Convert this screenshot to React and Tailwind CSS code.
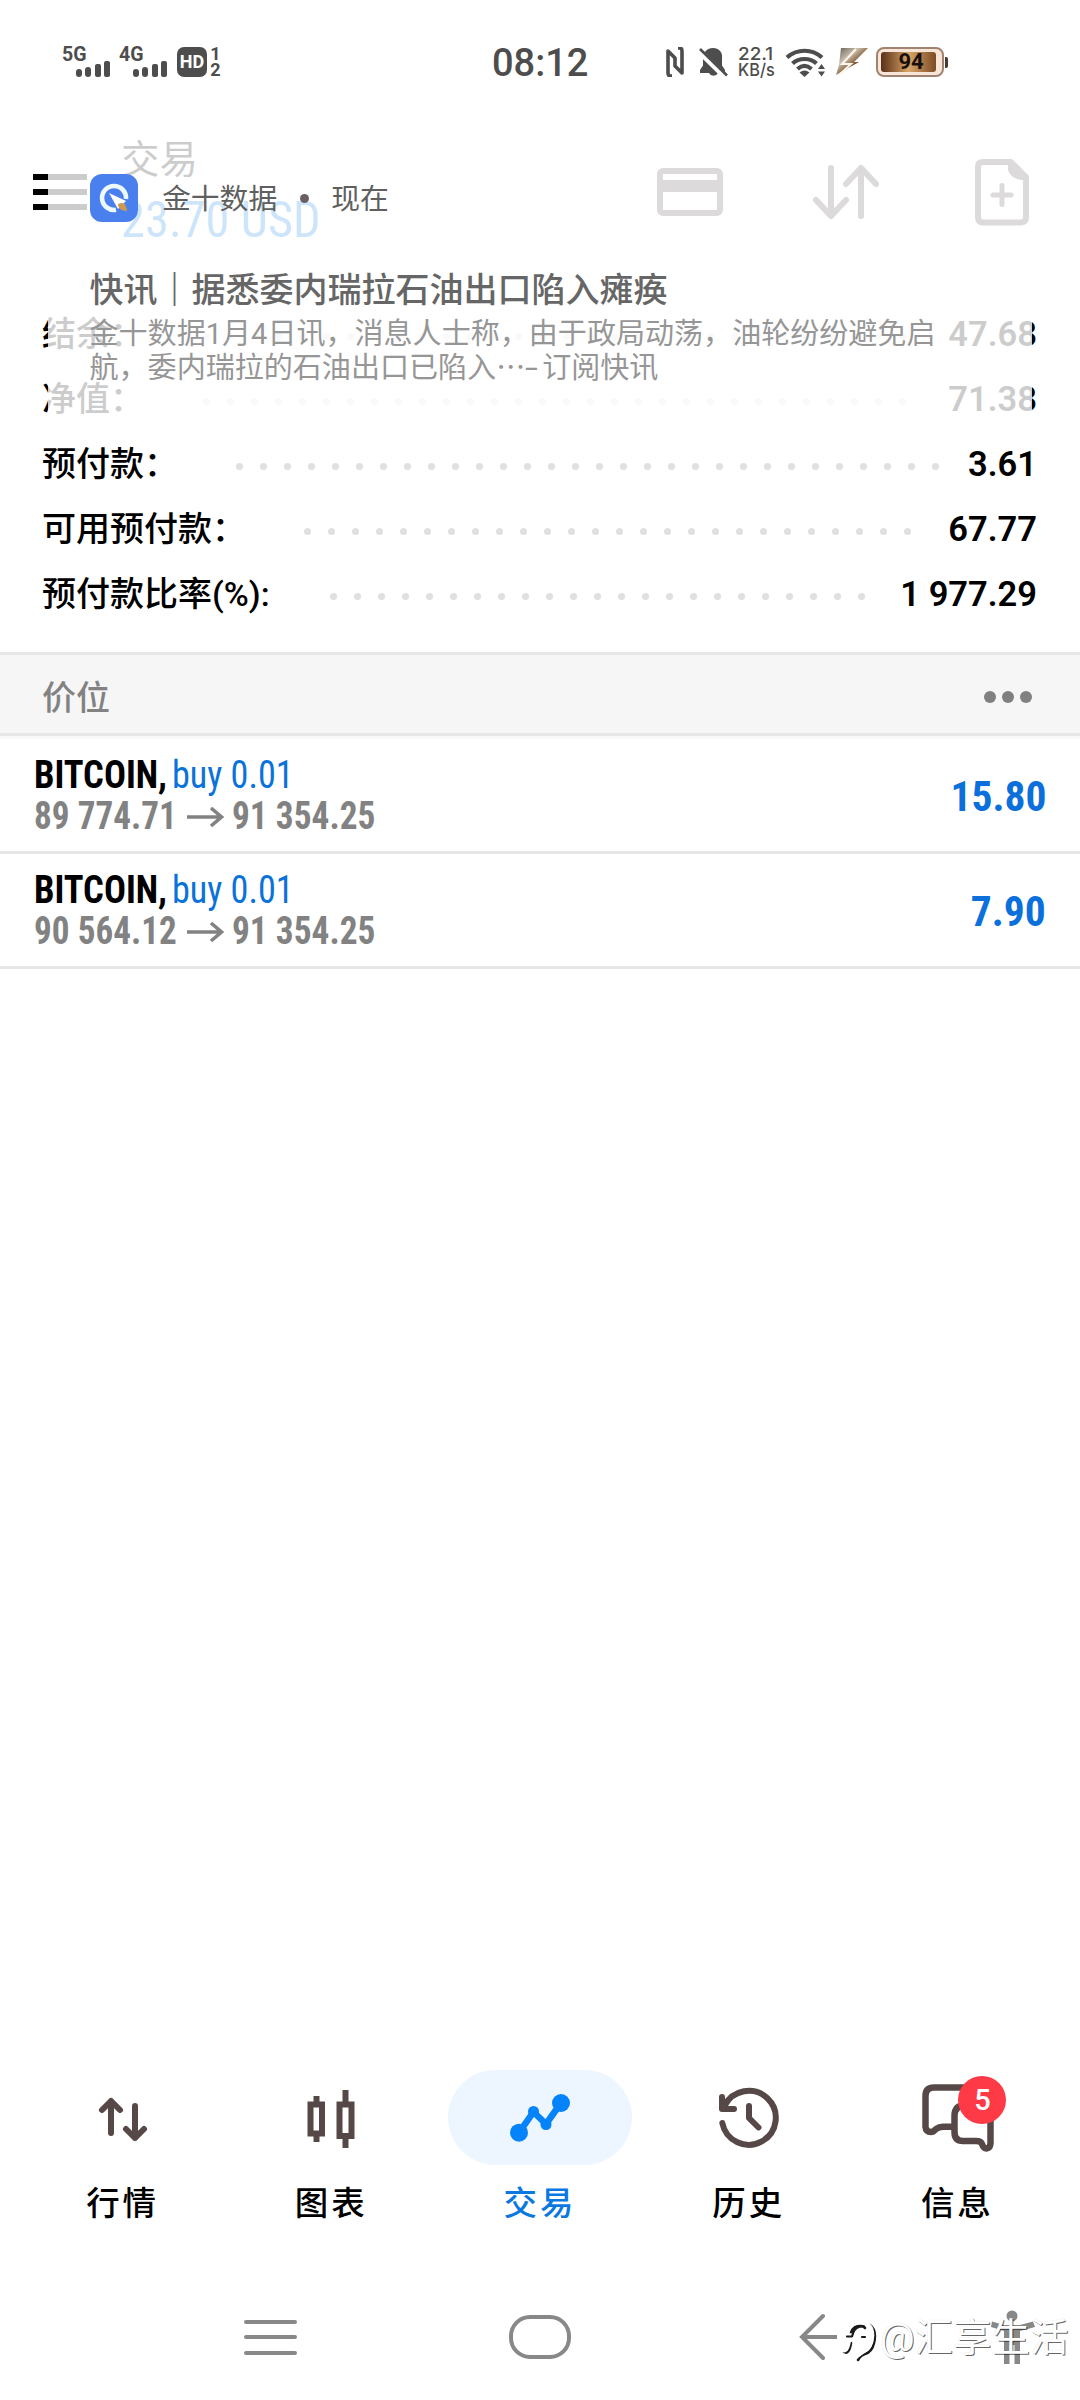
const account = [
  { label: '结余：', value: '47.68', dots: 30, right: 130 },
  { label: '净值：', value: '71.38', dots: 30, right: 130 },
  { label: '预付款：', value: '3.61', dots: 30, right: 97 },
  { label: '可用预付款：', value: '67.77', dots: 26, right: 125 },
  { label: '预付款比率(%):', value: '1 977.29', dots: 23, right: 171 },
];

const positions = [
  { open: '89 774.71', now: '91 354.25', profit: '15.80' },
  { open: '90 564.12', now: '91 354.25', profit: '7.90' },
];

function Signal({ label }) {
  return (
    <div className="flex h-[32px] w-[48px] flex-col">
      <span className="h-[15px] w-[30px] origin-left scale-x-[.95] text-[20.500px] leading-[16px] font-bold text-[#4d4d4d]">{label}</span>
      <div className="flex h-[16px] items-end justify-end gap-[3.5px]">
        <i className="h-[8px] w-[6px] rounded-full bg-[#4d4d4d]" />
        <i className="h-[10px] w-[6px] rounded-full bg-[#4d4d4d]" />
        <i className="h-[13px] w-[6px] rounded-[2px] bg-[#4d4d4d]" />
        <i className="h-[16px] w-[6px] rounded-[2px] bg-[#4d4d4d]" />
      </div>
    </div>
  );
}

function StatusBar() {
  return (
    <div className="flex h-[124px] shrink-0 items-center text-[#4d4d4d]">
      <div className="flex w-[492px] items-center pl-[62px]">
        <Signal label="5G" />
        <div className="ml-[9px]"><Signal label="4G" /></div>
        <div className="ml-[10px] flex h-[30px] w-[30px] items-center justify-center rounded-[7px] bg-[#4d4d4d] text-[18px] leading-none font-bold text-white">HD</div>
        <div className="ml-[3px] flex w-[11px] flex-col items-center text-[18px] leading-[16px] font-bold">
          <span>1</span>
          <span>2</span>
        </div>
      </div>
      <div className="w-[174px] pt-[2px] text-[38px] leading-none font-medium">08:12</div>
      <svg width="18" height="30" viewBox="666 47 18 30" fill="none" stroke="#4d4d4d" strokeWidth="3.6" strokeLinejoin="round">
        <path d="M672 76H670.500Q668 76 668 73V51L675 58V66M678 48H679.500Q682 48 682 51V73L675 66V58" />
      </svg>
      <svg className="ml-[14px]" width="30" height="31" viewBox="697 46 30 31">
        <path d="M712 47c-6 0-10 4.500-10 10.500v7l-3 4.500v3h9a5 5 0 0 0 9 0h7v-3l-3-4.500v-7C722 51.500 718 47 712 47z" fill="#4d4d4d" />
        <path d="M698.500 50.500L725.500 77" stroke="#fff" strokeWidth="6" />
        <path d="M699 48L726 74.500" stroke="#4d4d4d" strokeWidth="2.600" />
      </svg>
      <div className="ml-[10px] flex w-[48px] flex-col font-['Inter'] text-[17.5px] leading-[16px]">
        <span className="h-[16px] origin-left scale-x-[1.08] font-medium">22.1</span>
        <span className="h-[16px] origin-left scale-x-[.93] font-medium">KB/s</span>
      </div>
      <svg width="39" height="30" viewBox="785 47 39 30" fill="none" stroke="#4d4d4d" strokeWidth="4.200">
        <path d="M786 57.500C796 48.500 811 48.500 821 57.500M791.500 63.500C798 57.500 809 57.500 815.500 63.500M796.500 69C801 65 806 65 810.500 69" />
        <path d="M798.500 72.500Q803.500 68.500 808.500 72.500L803.500 77z" fill="#4d4d4d" stroke="none" />
        <path d="M820.500 64l3.500 5h-7zM820.500 76.500l3.500-5h-7z" fill="#4d4d4d" stroke="none" />
      </svg>
      <svg className="ml-[11px]" width="33" height="28" viewBox="835 49 33 28">
        <defs>
          <linearGradient id="bolt" x1="0" y1="0" x2="1" y2="1">
            <stop offset="0" stopColor="#5a5347" />
            <stop offset=".35" stopColor="#c9c0ae" />
            <stop offset=".6" stopColor="#7c4d2c" />
            <stop offset="1" stopColor="#e8c9a4" />
          </linearGradient>
        </defs>
        <path d="M840 49h27L853 63h5L835 76l3-10z" fill="url(#bolt)" />
        <path d="M855 50L841 65h9L839 75" fill="none" stroke="#fff6ea" strokeWidth="2" />
      </svg>
      <div className="ml-[7px] flex h-[30px] w-[68px] items-center rounded-[8px] border-2 border-[#a08471] bg-[#f7e6d8] p-[3px]">
        <div className="flex h-full w-[55px] items-center justify-center rounded-[3px] bg-linear-to-r from-[#5a3018] via-[#d9a668] to-[#7d4c26] pl-[5px] text-[22px] leading-none font-bold text-[#17100c]">94</div>
      </div>
      <i className="ml-px h-[11px] w-[3px] rounded-r-[2px] bg-[#4a3a2e]" />
    </div>
  );
}

function AppBar() {
  return (
    <div className="flex h-[136px] shrink-0 items-center pr-[51px] pl-[33px]">
      <div className="flex w-[88px] flex-col gap-[9px]">
        <i className="h-[6px] w-[54px] bg-black" />
        <i className="h-[6px] w-[54px] bg-black" />
        <i className="h-[6px] w-[54px] bg-black" />
      </div>
      <div className="flex flex-col">
        <span className="h-[54px] text-[38.500px] leading-[59px]">交易</span>
        <span className="h-[70px] origin-left scale-x-[.97] text-[50px] leading-[73px] text-[#007be6] font-['Roboto_Condensed']">23.70 USD</span>
      </div>
      <svg className="ml-auto" width="66" height="48" viewBox="0 0 66 48">
        <rect x="3" y="3" width="60" height="42" rx="3" fill="none" stroke="#524645" strokeWidth="6" />
        <rect x="3" y="12" width="60" height="12" fill="#524645" />
      </svg>
      <svg className="ml-[90px]" width="66" height="56" viewBox="813 164 66 56" fill="none" stroke="#524645" strokeWidth="6" strokeLinecap="round" strokeLinejoin="round">
        <path d="M831 168V215M816 200L831 216L846 200M861 216V168M846 184L861 168L876 184" />
      </svg>
      <svg className="ml-[96px]" width="54" height="67" viewBox="975 159 54 67">
        <path d="M983 162H1011L1026 177V217Q1026 222.500 1020.500 222.500H983Q978 222.500 978 217V167Q978 162 983 162Z" fill="none" stroke="#524645" strokeWidth="6" strokeLinejoin="round" />
        <path d="M1008 161V170Q1011 179 1022 180H1028V176L1013 161Z" fill="#524645" />
        <path d="M1002 185.500V204.500M993 195H1011" stroke="#524645" strokeWidth="5" strokeLinecap="round" />
      </svg>
    </div>
  );
}

function Notification() {
  return (
    <div className="absolute top-[112px] left-[48px] flex h-[332px] w-[984px] flex-col rounded-[28px] bg-white/80">
      <div className="mt-[62px] flex h-[48px] items-center pl-[42px] text-[28.800px] text-[#5f5f5f]">
        <svg width="48" height="48" viewBox="0 0 48 48">
          <rect width="48" height="48" rx="12" fill="#4a80ee" />
          <path d="M26 35.800A12 12 0 1 1 36 25" fill="none" stroke="#eef8ff" strokeWidth="4.600" />
          <path d="M19 19L36 27L28 35Z" fill="#fff" />
          <path d="M28 30Q36 26 37 37Q28 37 28 30Z" fill="#cf9a4e" />
        </svg>
        <span className="ml-[24px] pt-[2px] leading-[48px]">金十数据</span>
        <i className="ml-[23px] h-[9px] w-[9px] rounded-full bg-[#6a6064]" />
        <span className="ml-[22px] pt-[2px] leading-[48px]">现在</span>
      </div>
      <div className="mt-[44px] ml-[41.500px] h-[44px] text-[34px] leading-[48px] font-medium text-[#666]">
        快讯<span className="font-black">｜</span>据悉委内瑞拉石油出口陷入瘫痪
      </div>
      <div className="mt-[7px] ml-[41.500px] flex flex-col text-[29.050px] leading-[34px] whitespace-nowrap text-[#969696]">
        <span>金十数据1月4日讯，消息人士称，由于政局动荡，油轮纷纷避免启</span>
        <span className="flex">航，委内瑞拉的石油出口已陷入⋯<span className="origin-left w-[17px] scale-x-[1.6]">-</span>订阅快讯</span>
      </div>
    </div>
  );
}

function AccountRow({ label, value, dots, right }) {
  return (
    <div className="flex h-[65px] items-center justify-between">
      <span className="text-[34px] leading-[68px] font-medium">{label}</span>
      <div className="flex flex-1 items-center justify-end gap-[17px] pt-[5px] pr-[23px]">
        {Array.from({ length: dots }, (_, i) => (
          <i key={i} className="h-[7px] w-[7px] shrink-0 rounded-full bg-[#e0e0e0]" />
        ))}
      </div>
      <span className="flex justify-end text-[34.500px] leading-[66px] font-semibold" style={{ width: right - 22 }}>{value}</span>
    </div>
  );
}

function Position({ open, now, profit }) {
  return (
    <div className="flex h-[115px] items-center justify-between border-b-[3px] border-[#e6e6e6] pt-[2px] pr-[34px] pl-[34px] font-['Roboto_Condensed']">
      <div className="flex flex-col text-[38px] leading-[41px] whitespace-nowrap">
        <div className="flex">
          <span className="w-[138px] origin-left scale-x-[.96] font-bold">BITCOIN,</span>
          <span className="origin-left scale-x-[.95] text-[#0b72da]">buy 0.01</span>
        </div>
        <div className="flex items-center font-bold text-[#828282]">
          <span className="w-[153px] origin-left scale-x-[.925]">{open}</span>
          <svg width="37" height="22" viewBox="0 0 37 22" fill="none" stroke="#828282" strokeWidth="3.600">
            <path d="M0 11H35M24 2L34.500 11L24 20" />
          </svg>
          <span className="ml-[8px] origin-left scale-x-[.93]">{now}</span>
        </div>
      </div>
      <span className="origin-right scale-x-[.965] text-[43px] leading-none font-bold text-[#0b6fdc]">{profit}</span>
    </div>
  );
}

function Tab({ label, active, children }) {
  return (
    <div className="flex w-[208.700px] flex-col items-center">
      <div className={active ? 'flex h-[95px] w-[184px] items-center justify-center rounded-full bg-[#edf6fe]' : 'flex h-[95px] w-[184px] items-center justify-center'}>
        {children}
      </div>
      <span className={active ? 'mt-[12px] text-[33.500px] leading-[53px] font-medium tracking-[3px] text-[#0a78e0]' : 'mt-[12px] text-[33.500px] leading-[53px] font-medium tracking-[3px] text-black'}>{label}</span>
    </div>
  );
}

function BottomTabs() {
  return (
    <div className="mt-auto flex h-[204px] shrink-0 justify-center">
      <Tab label="行情">
        <svg width="184" height="95" viewBox="30 2070 184 95" fill="none" stroke="#554846" strokeWidth="6" strokeLinecap="round" strokeLinejoin="round">
          <path d="M110 2101V2133M101 2110L110 2101L119 2110M134 2106V2138M125 2129L134 2138L143 2129" />
        </svg>
      </Tab>
      <Tab label="图表">
        <svg width="184" height="95" viewBox="239 2070 184 95" fill="none" stroke="#554846" strokeWidth="6">
          <path d="M310.500 2104.500H322V2133.500H310.500ZM339.500 2104.500H351.500V2136H339.500ZM316.500 2096V2104M316.500 2134V2142M345.500 2090V2104M345.500 2136V2148" />
        </svg>
      </Tab>
      <Tab label="交易" active>
        <svg width="184" height="95" viewBox="448 2070 184 95" fill="#0583fb">
          <path d="M519 2132.700L533.500 2112L546 2124L561 2103" fill="none" stroke="#0583fb" strokeWidth="6.500" />
          <circle cx="519" cy="2132.700" r="9" />
          <circle cx="533.500" cy="2111.500" r="5.500" />
          <circle cx="546" cy="2124.500" r="5.500" />
          <circle cx="561" cy="2103" r="9" />
        </svg>
      </Tab>
      <Tab label="历史">
        <svg width="184" height="95" viewBox="657 2070 184 95" fill="none" stroke="#554846" strokeWidth="6" strokeLinecap="round" strokeLinejoin="round">
          <path d="M722.300 2123A27 27 0 1 0 724.500 2106M722 2097V2109H734M749 2106V2118L758.500 2127.500" />
        </svg>
      </Tab>
      <Tab label="信息">
        <div className="relative h-[95px] w-[184px]">
          <svg width="184" height="95" viewBox="865 2070 184 95" fill="none" stroke="#554846" strokeWidth="6.500" strokeLinecap="round" strokeLinejoin="round">
            <path d="M978 2087.500H934Q925.500 2087.500 925.500 2096V2127Q926 2132 931 2132Q933.500 2132 936 2129Q939 2126.700 943 2126.700H953M966 2105Q954.500 2105 954.500 2116V2132Q954.500 2141 963 2141H976Q981 2141 982 2144Q983.500 2148.500 986.500 2148.500Q990.500 2148 990.500 2143V2110" />
          </svg>
          <div className="absolute top-[6px] left-[93px] flex h-[48px] w-[48px] items-center justify-center rounded-full bg-[#fe3a46] text-[29px] leading-none font-medium text-white">5</div>
        </div>
      </Tab>
    </div>
  );
}

function SystemNav() {
  return (
    <div className="flex h-[126px] shrink-0 items-center pl-[244px]">
      <div className="flex w-[53px] flex-col gap-[11.500px]">
        <i className="h-[4px] rounded-full bg-[#888]" />
        <i className="h-[4px] rounded-full bg-[#888]" />
        <i className="h-[4px] rounded-full bg-[#888]" />
      </div>
      <i className="ml-[212px] h-[44px] w-[62px] rounded-[21px] border-4 border-[#888]" />
      <svg className="ml-[228px]" width="38" height="48" viewBox="800 2313 38 48" fill="none" stroke="#888" strokeWidth="4">
        <path d="M824 2316L803 2337L824 2358M803 2337H838" strokeLinecap="round" />
      </svg>
      <svg className="ml-[154px]" width="44" height="56" viewBox="992 2309 44 56" fill="#888">
        <circle cx="1013" cy="2316" r="5.500" />
        <path d="M993 2321.500L1005 2325H1021L1034 2321.500L1036 2327L1021 2331V2364H1015.500V2345H1010.500V2364H1005V2331L992 2327Z" />
      </svg>
    </div>
  );
}

function Watermark() {
  return (
    <div className="absolute top-[2309px] left-[841px] flex items-center text-white">
      <svg className="mt-[8px]" width="37" height="42" viewBox="0 0 37 42" fill="none" strokeLinecap="round" strokeLinejoin="round">
        <path d="M3 31Q8 34 10 22M9 17Q10 6 17 5Q22 4 24 7M29 4Q36 9 33 22Q31 31 24 33Q20 34 17 39" stroke="#1a1a1a" strokeWidth="2.600" />
        <path d="M1 29Q6 32 8 21L10 14H6Q8 3 16 2Q32 0 31.500 15Q31 27 22 31L15 36" stroke="#fff" strokeWidth="3.600" />
        <path d="M6 15.500H11L12.500 11Q15 5 23 5.500M21 16H24" stroke="#1a1a1a" strokeWidth="2.200" />
      </svg>
      <span className="ml-[2px] text-[38.500px] leading-[58px] whitespace-nowrap [text-shadow:1px_1px_0.500px_rgba(0,0,0,.6),0_0_1px_rgba(0,0,0,.15)]">@汇享生活</span>
    </div>
  );
}

export default function App() {
  return (
    <div className="relative flex h-[2400px] w-[1080px] flex-col overflow-hidden bg-white font-['Roboto','Noto_Sans_CJK_SC',sans-serif] text-black">
      <StatusBar />
      <AppBar />
      <div className="flex flex-col pt-[41px] pr-[43px] pb-[26px] pl-[42px]">
        {account.map((row) => (
          <AccountRow key={row.label} {...row} />
        ))}
      </div>
      <div className="flex h-[84px] shrink-0 items-center justify-between border-y-[3px] border-[#e6e6e6] bg-[#f6f6f6] pt-[5px] pr-[48px] pl-[42px]">
        <span className="pt-[3px] text-[34px] leading-none font-medium text-[#828282]">价位</span>
        <div className="flex gap-[6px]">
          <i className="h-[12px] w-[12px] rounded-full bg-[#808080]" />
          <i className="h-[12px] w-[12px] rounded-full bg-[#808080]" />
          <i className="h-[12px] w-[12px] rounded-full bg-[#808080]" />
        </div>
      </div>
      <div className="h-[3px] shrink-0 bg-[#f7f7f7]" />
      {positions.map((p) => (
        <Position key={p.open} {...p} />
      ))}
      <BottomTabs />
      <SystemNav />
      <Notification />
      <Watermark />
    </div>
  );
}
